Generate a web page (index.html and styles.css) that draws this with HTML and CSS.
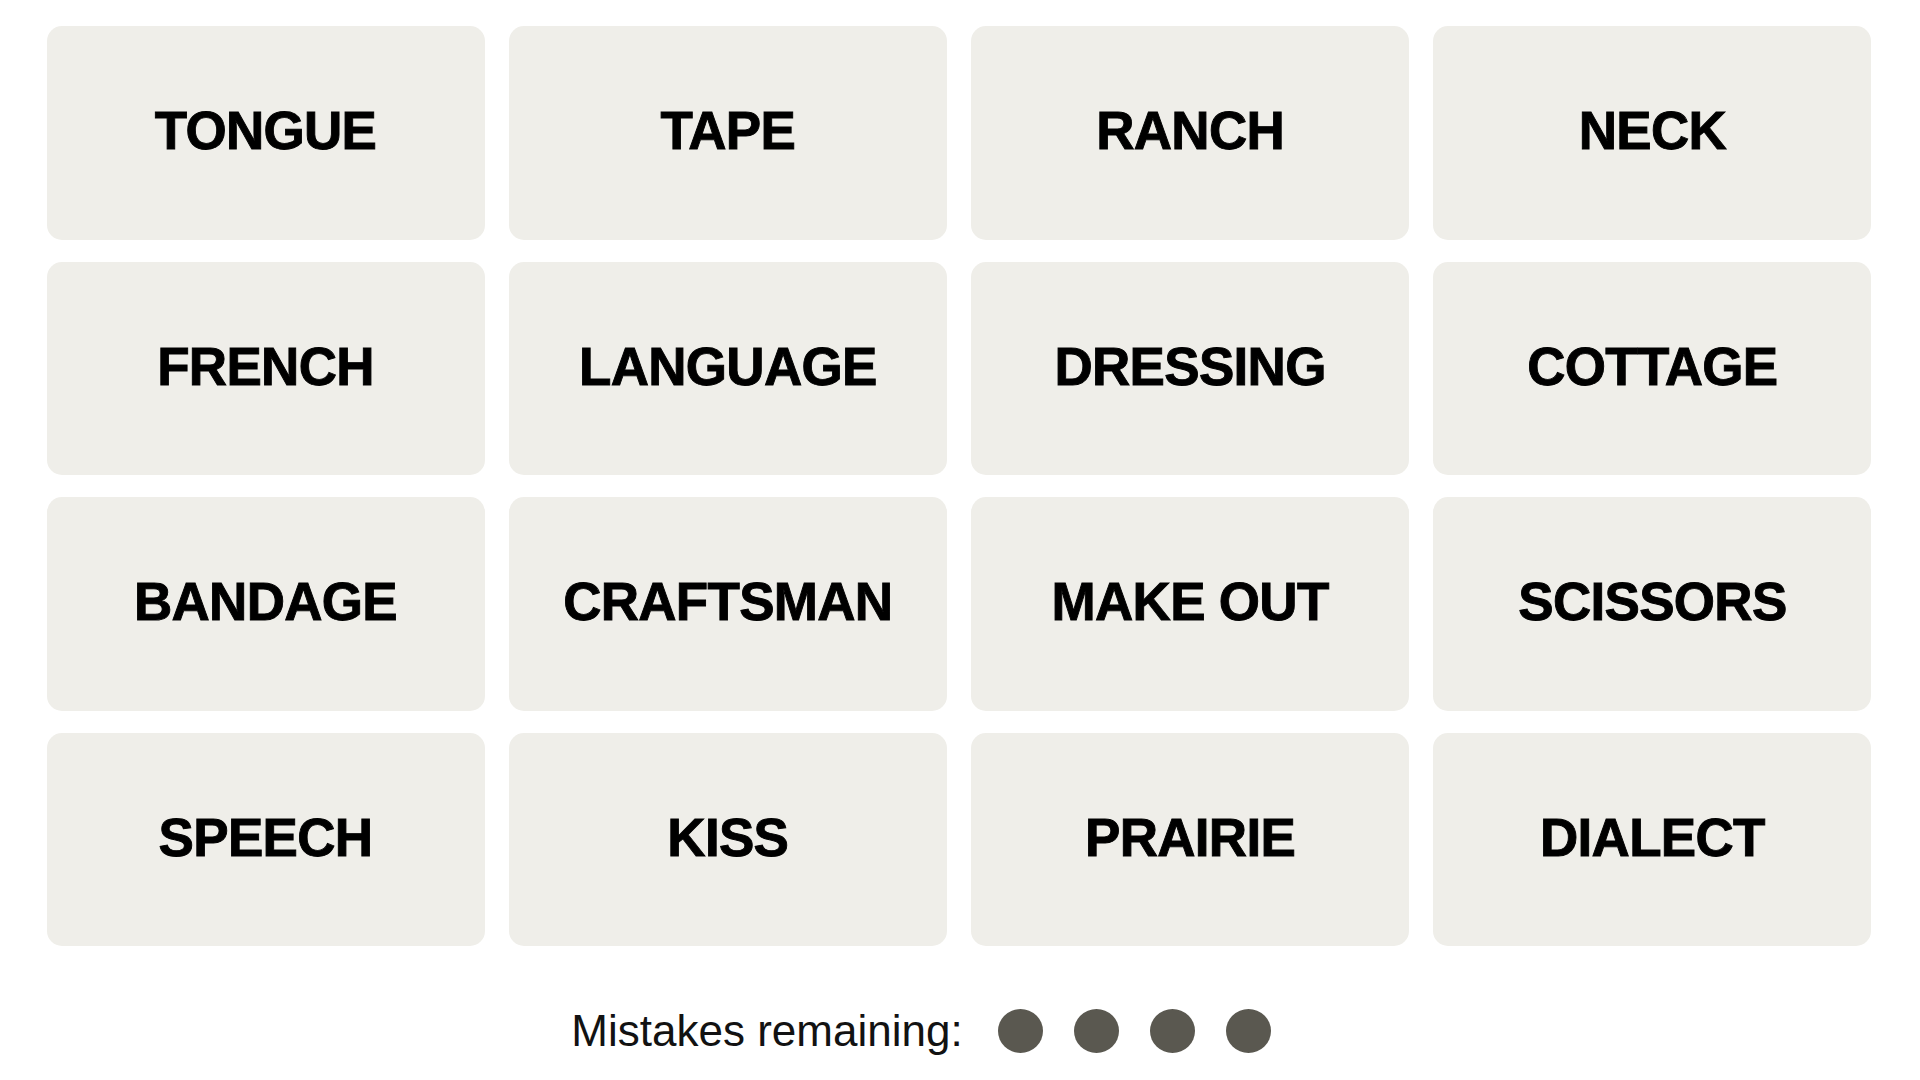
FILE: index.html
```html
<!DOCTYPE html>
<html>
<head>
  <title>Connections</title>
  <meta charset="UTF-8">
  <link rel="stylesheet" href="styles.css">
</head>
<body>
  <div class="board">
    <div class="tile">TONGUE</div>
    <div class="tile">TAPE</div>
    <div class="tile">RANCH</div>
    <div class="tile">NECK</div>
    <div class="tile">FRENCH</div>
    <div class="tile">LANGUAGE</div>
    <div class="tile">DRESSING</div>
    <div class="tile">COTTAGE</div>
    <div class="tile">BANDAGE</div>
    <div class="tile">CRAFTSMAN</div>
    <div class="tile">MAKE OUT</div>
    <div class="tile">SCISSORS</div>
    <div class="tile">SPEECH</div>
    <div class="tile">KISS</div>
    <div class="tile">PRAIRIE</div>
    <div class="tile">DIALECT</div>
  </div>
  <div class="mistakes">
    <p class="mistakesText">Mistakes remaining:</p>
    <div class="dots">
      <span class="dot"></span>
      <span class="dot"></span>
      <span class="dot"></span>
      <span class="dot"></span>
    </div>
  </div>
</body>
</html>
```
FILE: styles.css
```css
body {
  margin: 0;
  background: #fff;
  font-family: "Liberation Sans", Arial, sans-serif;
}
.board {
  width: 1827px;
  margin: 26px auto 0 auto;
  display: grid;
  grid-template-columns: repeat(4, 438px);
  grid-auto-rows: 213.5px;
  column-gap: 24.3px;
  row-gap: 22px;
}
.tile {
  background: #efeee9;
  border-radius: 15px;
  display: flex;
  align-items: center;
  justify-content: center;
  font-size: 53px;
  font-weight: bold;
  letter-spacing: -0.7px;
  -webkit-text-stroke: 0.9px #000;
  color: #000;
  padding-bottom: 4px;
  box-sizing: border-box;
}
.mistakes {
  display: flex;
  justify-content: center;
  align-items: center;
  height: 50px;
  margin-top: 60px;
  padding-right: 78px;
}
.mistakesText {
  margin: 0 35px 0 0;
  font-size: 44px;
  color: #121212;
}
.dots {
  display: flex;
  gap: 31px;
}
.dot {
  width: 45px;
  height: 44px;
  border-radius: 50%;
  background: #5a5850;
}
```
